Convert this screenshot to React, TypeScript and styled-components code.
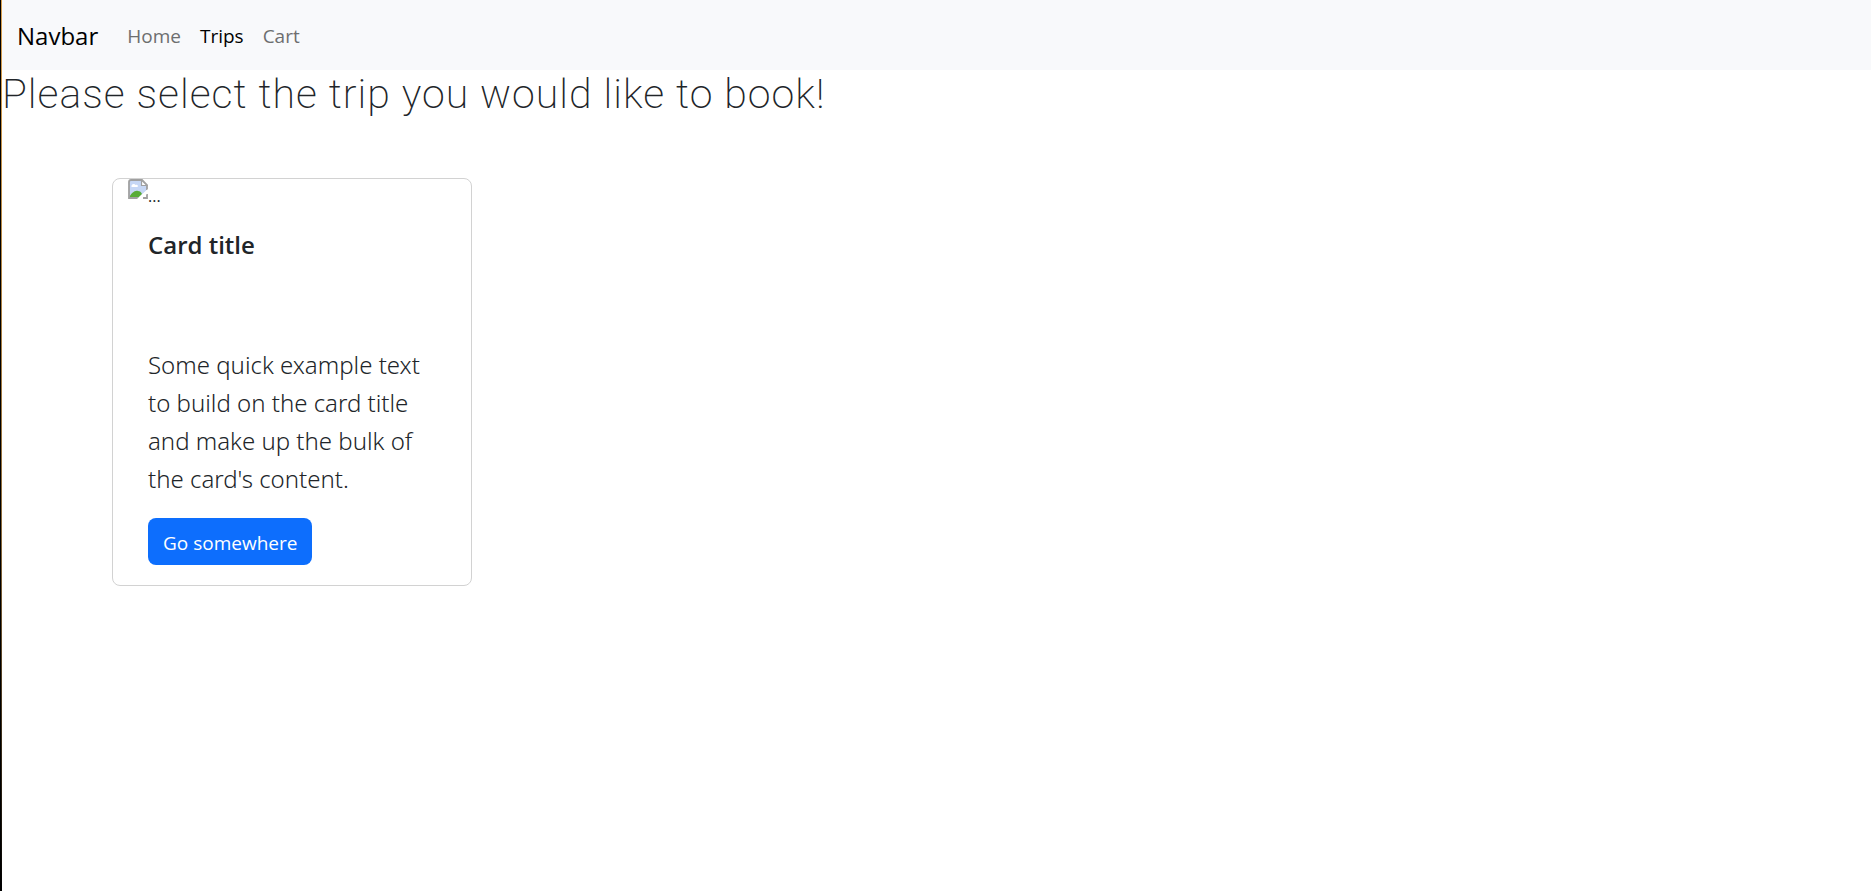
import React from 'react';
import styled, { createGlobalStyle } from 'styled-components';

const GlobalStyle = createGlobalStyle`
  *, *::before, *::after { box-sizing: border-box; }
  body {
    margin: 0;
    background: #fff;
    color: #212529;
    font-family: "Open Sans", "Noto Sans", sans-serif;
    font-size: 19px;
    line-height: 30px;
  }
`;

const Page = styled.div`
  display: flex;
  min-height: 100vh;
`;

const Edge = styled.div`
  flex: none;
  width: 2px;
  background: #000;
  border-right: 1px solid;
  border-image: linear-gradient(#d9a04e, #8a6a3c 60%, #000) 1;
`;

const Content = styled.div`
  flex: 1;
  min-width: 0;
`;

const Navbar = styled.nav`
  display: flex;
  align-items: center;
  padding: 11px 15px 9px;
  background: #f8f9fb;
`;

const Brand = styled.a`
  margin-right: 19px;
  padding: 6px 0;
  color: #000;
  font-size: 24px;
  line-height: 38px;
  text-decoration: none;
`;

const NavList = styled.ul`
  display: flex;
  margin: 0;
  padding: 0;
  list-style: none;
`;

const NavLink = styled.a<{ $active?: boolean }>`
  display: block;
  padding: 10px 9px 10px 10px;
  color: ${({ $active }) => ($active ? '#000' : '#6d6e6f')};
  text-decoration: none;
`;

const Heading = styled.h1`
  margin: 0;
  font-family: Roboto, sans-serif;
  font-size: 41px;
  font-weight: 200;
  line-height: 48px;
  letter-spacing: 1px;
`;

const Card = styled.article`
  width: 360px;
  max-width: 100%;
  margin: 60px 110px;
  padding: 0 15px;
  border: 1px solid #d2d2d2;
  border-radius: 8px;
`;

const CardImage = styled.div`
  display: flex;
  height: 30px;
  font-size: 16px;
  line-height: 34px;

  svg { flex: none; }
`;

const CardBody = styled.div`
  padding: 20px;
`;

const CardTitle = styled.h5`
  margin: 0 0 85px;
  font-size: 24px;
  font-weight: 600;
  line-height: 32px;
`;

const CardText = styled.p`
  margin: 0 0 20px;
  font-family: "Noto Sans", "Open Sans", sans-serif;
  font-size: 24px;
  font-weight: 300;
  line-height: 38px;
`;

const ActionLink = styled.a`
  display: inline-block;
  padding: 10px 15px 7px;
  border-radius: 8px;
  background: #0d6efd;
  color: #fff;
  text-decoration: none;
  vertical-align: top;
`;

function BrokenImage() {
  return (
    <svg width="20" height="20" viewBox="0 0 20 20" aria-hidden="true">
      <path d="M1 1h13l5 5v5L10 19H1z" fill="#c6d7f5" />
      <path d="M3.5 7c0-2 3-3 4-1 2-1 3 1 2 2h-6z" fill="#fff" />
      <path d="M1 19c2-5 6-8 9-7 2 0 3 1 4 3l-4 4z" fill="#58ac37" />
      <path d="M19 11V6l-5-5H3Q1 1 1 3v16h9M19 15v4h-4" fill="none" stroke="#a0a0a0" strokeWidth="1.8" />
      <path d="M13.5 1v5.5H19z" fill="#fff" stroke="#a0a0a0" strokeWidth="1.2" />
      <path d="M20 10 9 20h4l7-6z" fill="#fff" />
    </svg>
  );
}

const links = [
  { label: 'Home' },
  { label: 'Trips', active: true },
  { label: 'Cart' },
];

export default function App() {
  return (
    <>
      <GlobalStyle />
      <Page>
        <Edge />
        <Content>
          <Navbar>
            <Brand href="#">Navbar</Brand>
            <NavList>
              {links.map(({ label, active }) => (
                <li key={label}>
                  <NavLink href="#" $active={active}>{label}</NavLink>
                </li>
              ))}
            </NavList>
          </Navbar>
          <main>
            <Heading>Please select the trip you would like to book!</Heading>
            <Card>
              <CardImage>
                <BrokenImage />
                <span>...</span>
              </CardImage>
              <CardBody>
                <CardTitle>Card title</CardTitle>
                <CardText>
                  Some quick example text to build on the card title and make up the bulk of the card's content.
                </CardText>
                <ActionLink href="#">Go somewhere</ActionLink>
              </CardBody>
            </Card>
          </main>
        </Content>
      </Page>
    </>
  );
}
